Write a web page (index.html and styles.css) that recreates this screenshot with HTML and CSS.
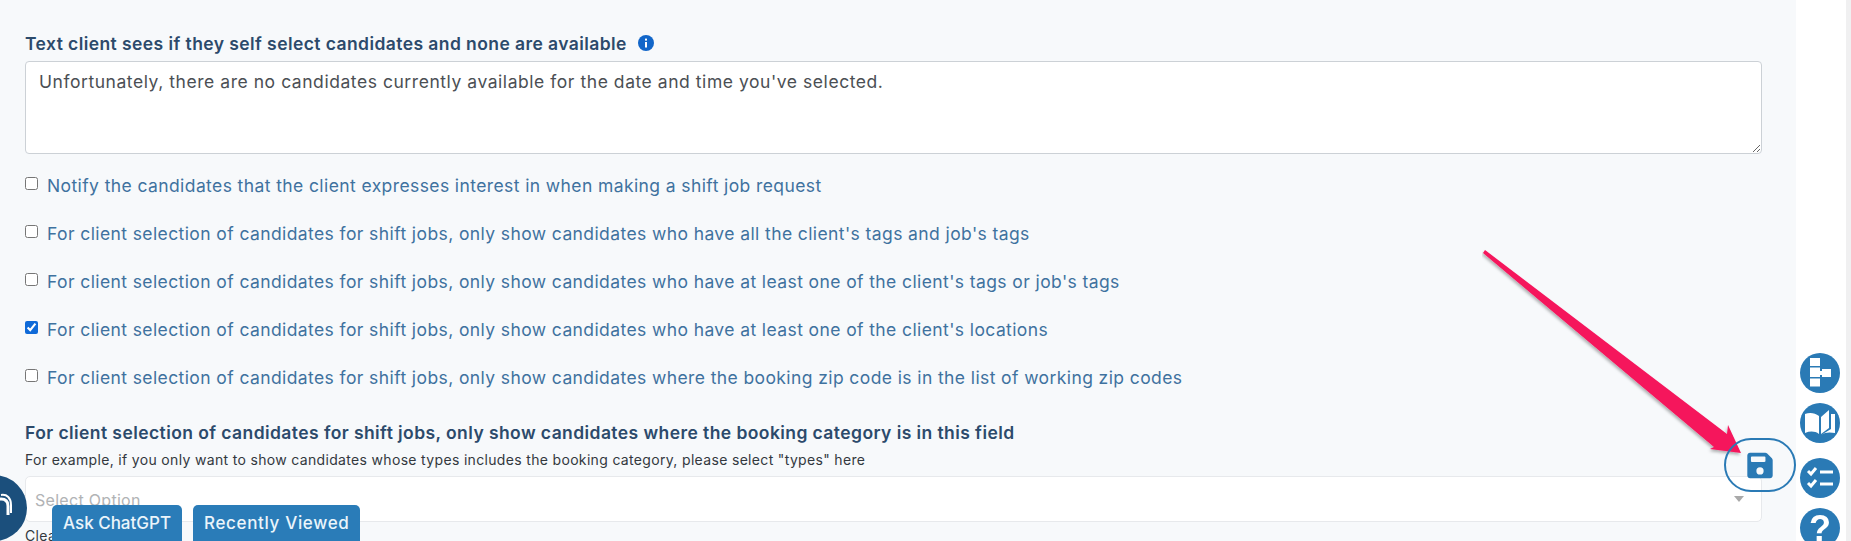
FILE: index.html
```html
<!DOCTYPE html>
<html lang="en">
<head>
    <meta charset="UTF-8">
    <title>Shift job settings</title>
    <link rel="stylesheet" href="styles.css">
</head>
<body>
    <div class="page">
        <main class="content">
            <div class="field-label">
                Text client sees if they self select candidates and none are available
                <svg class="info-icon" viewBox="0 0 16 16" width="16" height="16">
                    <circle cx="8" cy="8" r="8" fill="#1266c9"/>
                    <rect x="7" y="7" width="2" height="5.5" fill="#fff"/>
                    <rect x="7" y="3.6" width="2" height="2" fill="#fff"/>
                </svg>
            </div>
            <textarea class="text-box">Unfortunately, there are no candidates currently available for the date and time you've selected.</textarea>

            <label class="check-row"><input type="checkbox"><span>Notify the candidates that the client expresses interest in when making a shift job request</span></label>
            <label class="check-row"><input type="checkbox"><span>For client selection of candidates for shift jobs, only show candidates who have all the client's tags and job's tags</span></label>
            <label class="check-row"><input type="checkbox"><span>For client selection of candidates for shift jobs, only show candidates who have at least one of the client's tags or job's tags</span></label>
            <label class="check-row"><input type="checkbox" checked><span>For client selection of candidates for shift jobs, only show candidates who have at least one of the client's locations</span></label>
            <label class="check-row"><input type="checkbox"><span>For client selection of candidates for shift jobs, only show candidates where the booking zip code is in the list of working zip codes</span></label>

            <div class="field-label field-label-select">For client selection of candidates for shift jobs, only show candidates where the booking category is in this field</div>
            <div class="help-text">For example, if you only want to show candidates whose types includes the booking category, please select "types" here</div>
            <div class="select-box">
                <span class="select-placeholder">Select Option</span>
                <span class="select-caret"></span>
            </div>
            <div class="clear-link">Clear</div>
        </main>
        <aside class="side-rail"></aside>
        <div class="scroll-track"></div>
    </div>

    <!-- floating stuff -->
    <div class="chat-bubble">
        <svg viewBox="0 0 66 66" width="66" height="66">
            <circle cx="33" cy="33" r="33" fill="#1b4f7c"/>
            <path d="M32 38 V30 C32 25 36 24 40 24 C45 24 47 27 47 31 V40" fill="none" stroke="#fff" stroke-width="3"/>
            <path d="M40 20 C46 19 50 23 50 30 V38" fill="none" stroke="#fff" stroke-width="2"/>
        </svg>
    </div>
    <div class="float-buttons">
        <button class="float-btn">Ask ChatGPT</button>
        <button class="float-btn float-btn-wide">Recently Viewed</button>
    </div>

    <svg class="arrow" viewBox="0 0 280 220" width="280" height="220">
        <defs>
            <filter id="arrowShadow" x="-10%" y="-10%" width="120%" height="120%">
                <feDropShadow dx="-1" dy="2" stdDeviation="1.5" flood-color="#000" flood-opacity="0.3"/>
            </filter>
        </defs>
        <path d="M1 5 L3 2 L245 186 L246 177 L259 205 L228 201 L232 199 Z" fill="#f5145c" filter="url(#arrowShadow)"/>
    </svg>

    <button class="save-btn">
        <svg viewBox="0 0 448 512" width="26" height="29">
            <path fill="#2a7ab5" d="M48 32C22 32 0 54 0 80v352c0 26 22 48 48 48h352c26 0 48-22 48-48V163c0-13-5-25-14-34l-83-83c-9-9-21-14-34-14H48zm32 64h224c9 0 16 7 16 16v64c0 9-7 16-16 16H80c-9 0-16-7-16-16v-64c0-9 7-16 16-16zm144 192a64 64 0 1 1 0 128 64 64 0 1 1 0-128z"/>
        </svg>
    </button>

    <div class="tool-rail">
        <button class="tool-btn">
            <svg viewBox="0 0 40 40" width="40" height="40">
                <path fill="#fff" d="M10 5h10v8h-10zM10 14.500h10v9.500h-10zM10 25.500h10v8h-10zM20 18h2v-2h9v8h-9v-2h-2z"/>
            </svg>
        </button>
        <button class="tool-btn">
            <svg viewBox="0 0 40 40" width="40" height="40">
                <path fill="#fff" d="M5 11c5-2 10-1 14 2v18c-4-3-9-3-14-1zM21 14l8-7v18l-8 6zM31 11h4v19c-5-1-10-1-14 2l10-6z"/>
            </svg>
        </button>
        <button class="tool-btn tool-btn-gap">
            <svg viewBox="0 0 40 40" width="40" height="40">
                <path fill="none" stroke="#fff" stroke-width="3" d="M8 13l3 3 5-6M8 25l3 3 5-6"/>
                <path fill="none" stroke="#fff" stroke-width="3" d="M20 14h13M20 26h13"/>
            </svg>
        </button>
        <button class="tool-btn">
            <svg viewBox="0 0 40 40" width="40" height="40">
                <text x="20" y="33" text-anchor="middle" class="help-mark">?</text>
            </svg>
        </button>
    </div>
</body>
</html>
```

FILE: styles.css
```css
* {
    margin: 0;
    padding: 0;
    box-sizing: border-box;
}

html, body {
    height: 541px;
    overflow: hidden;
}

body {
    font-family: Inter, 'Open Sans', sans-serif;
    background: white;
}

.page {
    display: flex;
    height: 541px;
}

.content {
    width: 1796px;
    background: #f7f9fb;
    padding: 31px 34px 0 25px;
    flex-shrink: 0;
}

.side-rail {
    flex: 1;
    background: white;
}

.scroll-track {
    width: 5px;
    background: #f0f0f1;
}

.field-label {
    display: flex;
    align-items: center;
    gap: 6px;
    height: 24px;
    font-size: 17.500px;
    font-weight: 600;
    letter-spacing: 0.42px;
    color: #2c4a6b;
}

.info-icon {
    margin-left: 5px;
}

.text-box {
    display: block;
    width: 100%;
    height: 93px;
    margin-top: 6px;
    padding: 8px 13px;
    border: 1px solid #ccd1d6;
    border-radius: 4px;
    background: white;
    font-family: inherit;
    font-size: 17.500px;
    letter-spacing: 0.55px;
    line-height: 24px;
    color: #4b4f54;
    outline: none;
}

.check-row {
    display: flex;
    align-items: center;
    gap: 9px;
    height: 24px;
    margin-bottom: 24px;
    font-size: 17.500px;
    letter-spacing: 0.4px;
    color: #3f729f;
}

.text-box + .check-row {
    margin-top: 19px;
}

.check-row input {
    width: 13px;
    height: 13px;
    margin: -4px 0 0;
    accent-color: #0f6ad8;
}

.field-label-select {
    margin-top: 31px;
}

.help-text {
    margin-top: 6px;
    font-size: 14px;
    letter-spacing: 0.33px;
    line-height: 20px;
    color: #33383e;
}

.select-box {
    position: relative;
    height: 46px;
    margin-top: 6px;
    padding: 13px 9px;
    background: white;
    border: 1px solid #e7e9ec;
    border-radius: 5px;
    font-size: 16px;
    letter-spacing: 0.3px;
    color: #b1b3b5;
}

.select-caret {
    position: absolute;
    right: 17px;
    top: 19px;
    border-left: 5px solid transparent;
    border-right: 5px solid transparent;
    border-top: 6px solid #a9a9a9;
}

.clear-link {
    margin-top: 5px;
    font-size: 14px;
    letter-spacing: 0.33px;
    color: #33383e;
}

.chat-bubble {
    position: fixed;
    left: -39px;
    top: 475px;
    width: 66px;
    height: 66px;
}

.float-buttons {
    position: fixed;
    left: 52px;
    top: 505px;
    display: flex;
    gap: 11px;
}

.float-btn {
    height: 44px;
    padding: 0 11px 8px;
    background: #2a7cb8;
    color: #eaf5fb;
    border: none;
    border-radius: 5px;
    font-family: inherit;
    font-size: 17px;
    font-weight: 500;
}

.float-btn-wide {
    letter-spacing: 0.65px;
}

.arrow {
    position: fixed;
    left: 1482px;
    top: 248px;
}

.save-btn {
    position: fixed;
    left: 1724px;
    top: 438px;
    width: 72px;
    height: 54px;
    display: flex;
    align-items: center;
    justify-content: center;
    background: transparent;
    border: 2px solid #2a7ab5;
    border-radius: 27px;
}

.tool-rail {
    position: fixed;
    left: 1800px;
    top: 353px;
    display: flex;
    flex-direction: column;
    gap: 10px;
}

.tool-btn {
    width: 40px;
    height: 40px;
    border: none;
    border-radius: 50%;
    background: #2a7ab5;
    overflow: hidden;
}

.tool-btn-gap {
    margin-top: 5px;
}

.help-mark {
    font-family: 'Liberation Sans', sans-serif;
    font-size: 36px;
    font-weight: 700;
    fill: white;
}
```
